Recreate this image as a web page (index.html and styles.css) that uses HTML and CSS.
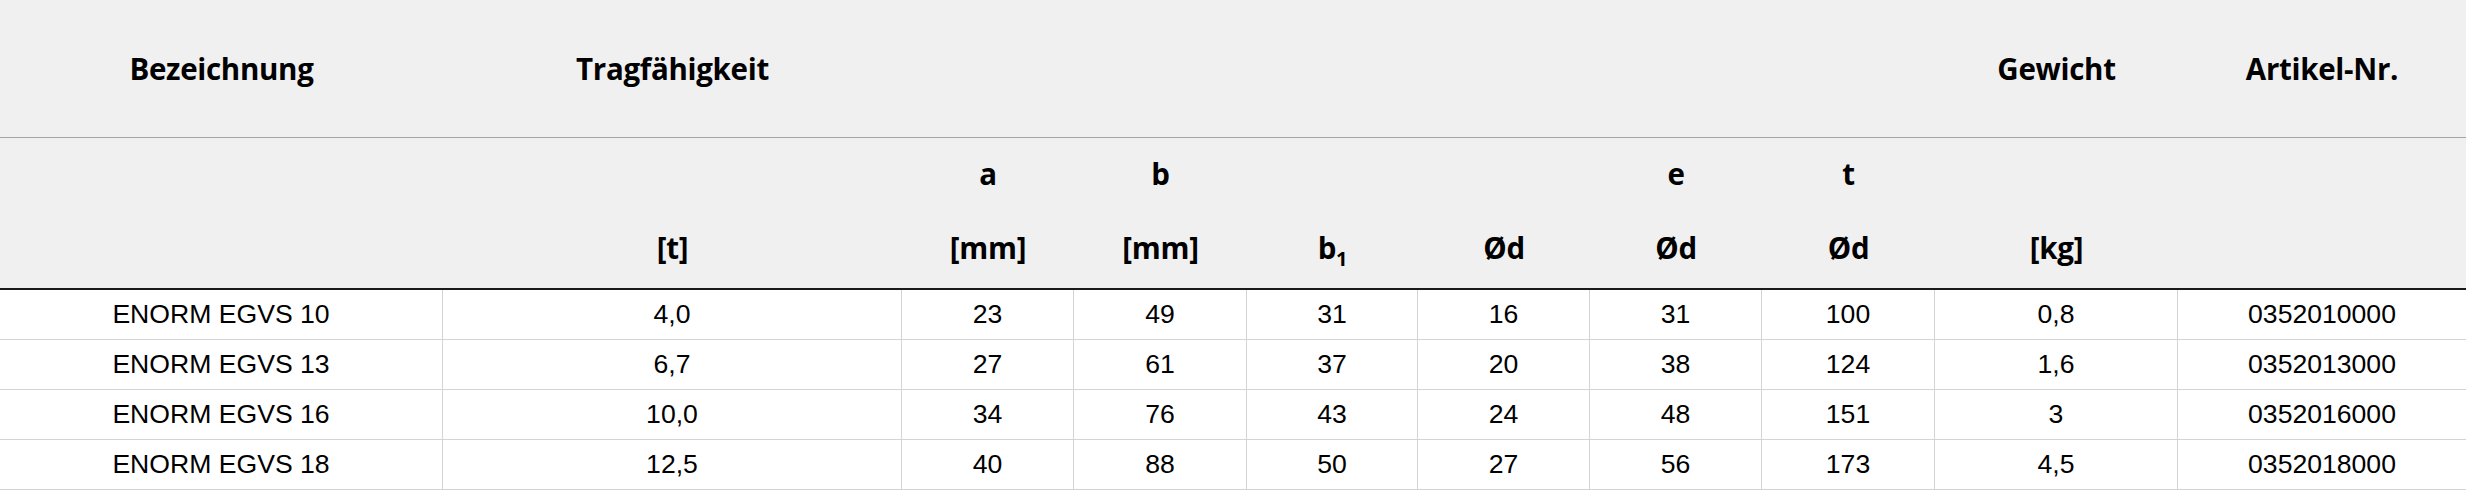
FILE: index.html
```html
<!DOCTYPE html>
<html lang="de">
<head>
<meta charset="utf-8">
<title>ENORM EGVS</title>
<link rel="stylesheet" href="styles.css">
</head>
<body>
<div class="table">
  <div class="row head1">
    <div class="cell">Bezeichnung</div>
    <div class="cell">Tragfähigkeit</div>
    <div class="cell"></div>
    <div class="cell"></div>
    <div class="cell"></div>
    <div class="cell"></div>
    <div class="cell"></div>
    <div class="cell"></div>
    <div class="cell">Gewicht</div>
    <div class="cell">Artikel-Nr.</div>
  </div>
  <div class="row head2">
    <div class="cell"><div class="l1"></div><div class="l2"></div></div>
    <div class="cell"><div class="l1"></div><div class="l2">[t]</div></div>
    <div class="cell"><div class="l1">a</div><div class="l2">[mm]</div></div>
    <div class="cell"><div class="l1">b</div><div class="l2">[mm]</div></div>
    <div class="cell"><div class="l1"></div><div class="l2">b<sub>1</sub></div></div>
    <div class="cell"><div class="l1"></div><div class="l2">Ød</div></div>
    <div class="cell"><div class="l1">e</div><div class="l2">Ød</div></div>
    <div class="cell"><div class="l1">t</div><div class="l2">Ød</div></div>
    <div class="cell"><div class="l1"></div><div class="l2">[kg]</div></div>
    <div class="cell"><div class="l1"></div><div class="l2"></div></div>
  </div>
  <div class="row body">
    <div class="cell">ENORM EGVS 10</div><div class="cell">4,0</div><div class="cell">23</div><div class="cell">49</div><div class="cell">31</div><div class="cell">16</div><div class="cell">31</div><div class="cell">100</div><div class="cell">0,8</div><div class="cell">0352010000</div>
  </div>
  <div class="row body">
    <div class="cell">ENORM EGVS 13</div><div class="cell">6,7</div><div class="cell">27</div><div class="cell">61</div><div class="cell">37</div><div class="cell">20</div><div class="cell">38</div><div class="cell">124</div><div class="cell">1,6</div><div class="cell">0352013000</div>
  </div>
  <div class="row body">
    <div class="cell">ENORM EGVS 16</div><div class="cell">10,0</div><div class="cell">34</div><div class="cell">76</div><div class="cell">43</div><div class="cell">24</div><div class="cell">48</div><div class="cell">151</div><div class="cell">3</div><div class="cell">0352016000</div>
  </div>
  <div class="row body">
    <div class="cell">ENORM EGVS 18</div><div class="cell">12,5</div><div class="cell">40</div><div class="cell">88</div><div class="cell">50</div><div class="cell">27</div><div class="cell">56</div><div class="cell">173</div><div class="cell">4,5</div><div class="cell">0352018000</div>
  </div>
</div>
</body>
</html>
```
FILE: styles.css
```css
* { box-sizing: border-box; }
html, body { margin: 0; padding: 0; background: #ffffff; }
.table { width: 2466px; }
.row {
  display: grid;
  grid-template-columns: 443px 459px 172px 173px 171px 172px 172px 173px 243px 288px;
}
.cell { text-align: center; }
.head1, .head2 {
  background: #f0f0f0;
  font-family: "Open Sans", "DejaVu Sans", sans-serif;
  font-weight: 700;
  font-size: 29.5px;
  color: #000;
  letter-spacing: -0.3px;
}
.head1 { height: 138px; border-bottom: 1px solid #a6a6a6; }
.head1 .cell { display: flex; align-items: center; justify-content: center; }
.head2 { height: 152px; border-bottom: 2px solid #1a1a1a; }
.head2 .cell {
  display: flex;
  flex-direction: column;
  justify-content: center;
  padding-bottom: 6px;
}
.head2 .l1, .head2 .l2 { height: 37px; line-height: 37px; }
.head2 .l2 { margin-top: 37px; }
.head2 sub { font-size: 0.68em; vertical-align: -7px; line-height: 0; }
.body {
  height: 50px;
  font-family: "Liberation Sans", Arial, sans-serif;
  font-size: 26.6px;
  color: #000;
}
.body .cell {
  display: flex;
  align-items: center;
  justify-content: center;
  border-bottom: 1px solid #d4d4d4;
  border-right: 1px solid #d4d4d4;
}
.body .cell:last-child { border-right: none; }
```
